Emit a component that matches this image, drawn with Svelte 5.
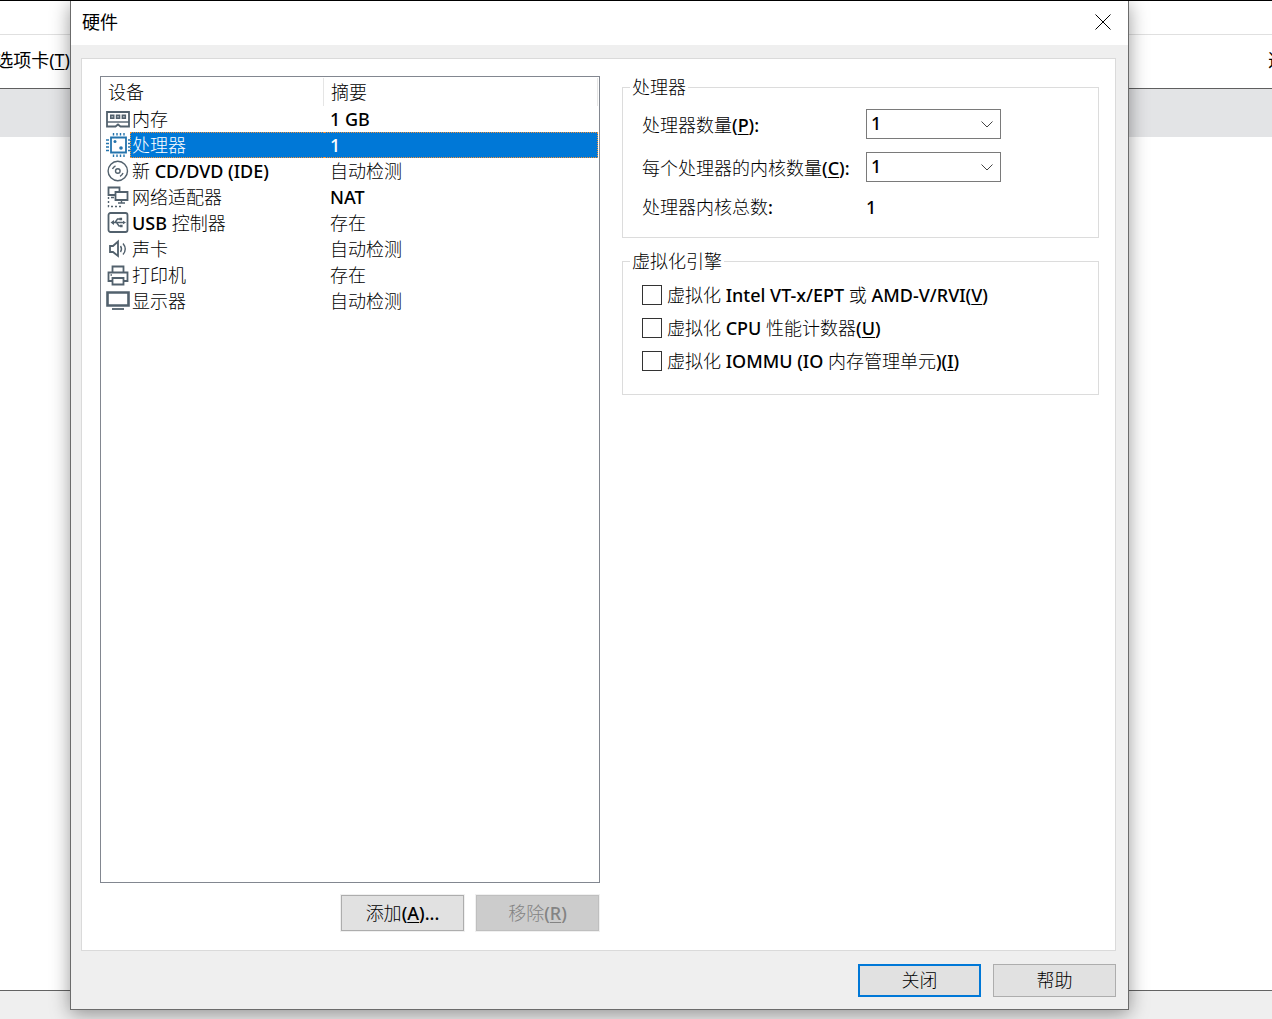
<script>
  const devices = [
    { icon: 'memory', name: '内存', summary: '1 GB' },
    { icon: 'cpu', name: '处理器', summary: '1' },
    { icon: 'disc', name: '新 CD/DVD (IDE)', summary: '自动检测' },
    { icon: 'network', name: '网络适配器', summary: 'NAT' },
    { icon: 'usb', name: 'USB 控制器', summary: '存在' },
    { icon: 'sound', name: '声卡', summary: '自动检测' },
    { icon: 'printer', name: '打印机', summary: '存在' },
    { icon: 'display', name: '显示器', summary: '自动检测' }
  ];
  const options = [
    { text: '虚拟化 Intel VT-x/EPT 或 AMD-V/RVI', key: 'V' },
    { text: '虚拟化 CPU 性能计数器', key: 'U' },
    { text: '虚拟化 IOMMU (IO 内存管理单元)', key: 'I' }
  ];
  const counts = ['1', '2', '4', '8'];

  let selected = $state(1);
  let processors = $state('1');
  let cores = $state('1');
  let total = $derived(Number(processors) * Number(cores));

  // Chinese runs are set light, Latin runs in a heavier weight.
  const runs = (text) => text.match(/[\u4e00-\u9fff]+|[^\u4e00-\u9fff]+/g) ?? [];
  const isHan = (run) => /[\u4e00-\u9fff]/.test(run);
</script>

{#snippet mixed(text, key = '', tail = '')}{#each runs(text) as run}{#if isHan(run)}{run}{:else}<span class="latin">{run}</span>{/if}{/each}{#if key}<span class="latin">(<u>{key}</u>){tail}</span>{/if}{/snippet}

{#snippet deviceIcon(kind)}
  <svg class="icon" viewBox="0 0 24 26" aria-hidden="true">
    {#if kind === 'memory'}
      <path d="M1 6H23V20.5H14.5L12 18.5L9.5 20.5H1Z" class="line2" />
      <path d="M1 16H23" class="line15" />
      <path d="M4.7 9.2h3.1v3.1H4.700zM10.500 9.200h3.100v3.100h-3.100zM16.300 9.200h3.100v3.100h-3.100z" class="line15 tint" />
    {:else if kind === 'cpu'}
      <g class="blue">
        <path d="M5 5.500H20V20.500H5Z" class="line2" />
        <path d="M7.500 1v2.500M11 1v2.500M14.500 1v2.500M18 1v2.500M7.500 22.500v2.500M11 22.500v2.500M14.500 22.500v2.500M18 22.500v2.500M0 8h3M0 11.500h3M0 15h3M0 18.500h3M22 8h2M22 11.500h2M22 15h2M22 18.500h2" class="line15" />
        <circle cx="9" cy="9.500" r="1.500" class="solid" />
        <circle cx="15" cy="16" r="1.800" class="solid" />
      </g>
    {:else if kind === 'disc'}
      <circle cx="11.800" cy="13" r="9.700" class="line15" />
      <circle cx="11.800" cy="13" r="2.300" class="line15" />
      <path d="M6.500 11A6 6 0 0 1 9.500 7.800M17 15A6 6 0 0 1 14 18.300" class="line15" />
    {:else if kind === 'network'}
      <path d="M2.500 3.500H13.500V11H2.500Z" class="line2" />
      <path d="M9.500 8H21.500V16H9.500Z" class="line2 paper" />
      <path d="M15.500 16V19M12 19H19M5 13.500H8" class="line15" />
      <path d="M2.500 13V22.500H15" class="line15 dots" />
    {:else if kind === 'usb'}
      <rect x="2.500" y="3" width="19" height="19" rx="2" class="line2" />
      <path d="M6 12.500H18M9 12.500L11.500 9H14M10.500 12.500L13 16H15" class="line15" />
      <path d="M4.500 12.500L8 10V15ZM20 12.500L17 10.700V14.300ZM13.500 7.700h2.600v2.600h-2.600zM14 14.700h2.600v2.600H14z" class="solid" />
    {:else if kind === 'sound'}
      <path d="M4 10H7L12 5.500V20L7 16H4Z" class="line2" />
      <path d="M14.500 10Q16.500 13 14.500 16M17 7.500Q21.500 13 17 18.500" class="line15" />
    {:else if kind === 'printer'}
      <path d="M6.500 10V4.500H17.500V10M6.500 19H2.500V10.500H21.500V19H17.500" class="line2" />
      <path d="M6.500 16H17.500V22.500H6.500Z" class="line2" />
      <path d="M4.500 13h1.500" class="line15" />
    {:else}
      <path d="M1.500 4.500H22.500V17.500H1.500Z" class="line3" />
      <path d="M6 21H18" class="line2" />
    {/if}
  </svg>
{/snippet}

<div class="screen">
  <div class="backdrop">
    <div class="strip"></div>
    <div class="menu">
      <div class="menu-left"><span>选项卡(<u>T</u>)</span></div>
      <div class="menu-right"><span>选</span></div>
    </div>
    <div class="tabs"></div>
    <div class="canvas"></div>
    <div class="status"></div>
  </div>

  <div class="dialog" role="dialog" aria-labelledby="dialog-title">
    <header>
      <h1 id="dialog-title">硬件</h1>
      <button class="close" aria-label="关闭窗口">
        <svg viewBox="0 0 16 16" aria-hidden="true"><path d="M0.5 0.5L15.5 15.5M15.5 0.5L0.5 15.5" /></svg>
      </button>
    </header>

    <div class="body">
      <main>
        <section class="left">
          <div class="list">
            <table>
              <thead>
                <tr><th class="first"><span>设备</span></th><th><span>摘要</span></th></tr>
              </thead>
              <tbody>
                {#each devices as d, i}
                  <tr class:selected={i === selected} onclick={() => (selected = i)}>
                    <td>
                      <div class="device">{@render deviceIcon(d.icon)}<span class="name">{@render mixed(d.name)}</span></div>
                    </td>
                    <td><div class="summary">{@render mixed(d.summary)}</div></td>
                  </tr>
                {/each}
              </tbody>
            </table>
          </div>
          <div class="actions">
            <button class="tall">{@render mixed('添加', 'A', '...')}</button>
            <button class="tall" disabled>{@render mixed('移除', 'R')}</button>
          </div>
        </section>

        <section class="right">
          <fieldset>
            <legend>处理器</legend>
            <div class="fields">
              <label for="processors">{@render mixed('处理器数量', 'P', ':')}</label>
              <div class="combo">
                <select id="processors" bind:value={processors}>
                  {#each counts as c}<option>{c}</option>{/each}
                </select>
                <svg viewBox="0 0 12 7" aria-hidden="true"><path d="M0.5 0.5L6 6L11.5 0.5" /></svg>
              </div>
              <label for="cores">{@render mixed('每个处理器的内核数量', 'C', ':')}</label>
              <div class="combo">
                <select id="cores" bind:value={cores}>
                  {#each counts as c}<option>{c}</option>{/each}
                </select>
                <svg viewBox="0 0 12 7" aria-hidden="true"><path d="M0.5 0.5L6 6L11.5 0.5" /></svg>
              </div>
              <span>{@render mixed('处理器内核总数:')}</span>
              <output class="latin" for="processors cores">{total}</output>
            </div>
          </fieldset>

          <fieldset>
            <legend>虚拟化引擎</legend>
            <div class="checks">
              {#each options as o}
                <label><input type="checkbox" /><span>{@render mixed(o.text, o.key)}</span></label>
              {/each}
            </div>
          </fieldset>
        </section>
      </main>

      <footer>
        <button class="default">关闭</button>
        <button>帮助</button>
      </footer>
    </div>
  </div>
</div>

<style>
  :global(body) {
    margin: 0;
  }
  .screen {
    display: grid;
    min-height: 100vh;
    overflow: hidden;
    box-sizing: border-box;
    border-top: 1px solid #000;
    font: 300 18px/24px 'Noto Sans', 'Noto Sans CJK SC', sans-serif;
    color: #000;
    background: #fff;
  }
  .backdrop,
  .dialog {
    grid-area: 1 / 1;
    min-width: 0;
  }
  .latin {
    font-weight: 500;
  }
  u {
    text-decoration-thickness: 1px;
    text-underline-offset: 2px;
  }

  /* window behind the dialog */
  .backdrop {
    display: flex;
    flex-direction: column;
  }
  .strip {
    height: 33px;
    border-bottom: 1px solid #e0e0e0;
  }
  .menu {
    box-sizing: border-box;
    display: flex;
    justify-content: space-between;
    align-items: center;
    height: 54px;
    padding-bottom: 3px;
    border-bottom: 1px solid #5f5f5f;
    white-space: nowrap;
    font-weight: 400;
  }
  .menu-left {
    display: flex;
    justify-content: flex-end;
    width: 70px;
    overflow: hidden;
  }
  .menu-right {
    width: 4px;
    overflow: hidden;
  }
  .tabs {
    height: 48px;
    background: #e3e4e6;
  }
  .canvas {
    flex: 1;
    border-bottom: 1px solid #636363;
  }
  .status {
    height: 28px;
    background: #efefef;
  }

  .dialog {
    display: flex;
    flex-direction: column;
    margin: 0 143px 9px 70px;
    border: 1px solid #6b6b6b;
    border-top: 0;
    background: #efefef;
    box-shadow: 0 4px 18px rgba(0, 0, 0, 0.4);
    z-index: 1;
  }
  header {
    box-sizing: border-box;
    display: flex;
    align-items: center;
    justify-content: space-between;
    height: 44px;
    padding: 0 17px 2px 11px;
    background: #fff;
  }
  h1 {
    margin: 0;
    font-size: 18px;
    font-weight: 400;
  }
  .close {
    display: flex;
    width: 16px;
    height: 16px;
    padding: 0;
    border: 0;
    background: none;
  }
  .close svg {
    width: 16px;
    height: 16px;
    fill: none;
    stroke: #000;
  }
  .body {
    display: flex;
    flex: 1;
    flex-direction: column;
    gap: 13px;
    padding: 13px 12px 12px 10px;
  }
  main {
    display: grid;
    flex: 1;
    grid-template-columns: 500fr 477fr;
    gap: 22px;
    padding: 17px 16px 19px 18px;
    border: 1px solid #dadada;
    background: #fff;
  }
  .left,
  .right {
    display: flex;
    flex-direction: column;
    gap: 12px;
    min-width: 0;
  }
  .list {
    flex: 1;
    padding-right: 1px;
    border: 1px solid #828790;
  }

  table {
    width: 100%;
    border-collapse: separate;
    border-spacing: 0;
    table-layout: fixed;
  }
  th,
  td {
    padding: 0;
    text-align: left;
    font-weight: inherit;
  }
  th {
    height: 29px;
  }
  th span {
    display: block;
    margin-top: 1px;
    padding: 2px 0 2px 7px;
    border-right: 1px solid #e5e5e5;
  }
  .first {
    width: 223px;
  }
  .device {
    display: flex;
    padding-left: 5px;
  }
  .icon {
    flex: none;
    width: 24px;
    height: 26px;
    fill: none;
    stroke: #52616d;
  }
  .name {
    flex: 1;
    height: 24px;
    padding-left: 1px;
    border: 1px solid transparent;
    border-right: 0;
  }
  .summary {
    height: 24px;
    padding-left: 6px;
    border: 1px solid transparent;
    border-left: 0;
  }
  .selected .name,
  .selected .summary {
    border-color: #f39239;
    border-style: dotted;
    background: #0078d7;
    color: #fff;
  }
  .line15 {
    stroke-width: 1.4;
  }
  .line2 {
    stroke-width: 1.8;
  }
  .line3 {
    stroke-width: 2.6;
  }
  .solid {
    fill: #52616d;
    stroke: none;
  }
  .tint {
    fill: #a5adb4;
  }
  .paper {
    fill: #fff;
  }
  .dots {
    stroke-dasharray: 2 2;
  }
  .blue {
    stroke: #2474ad;
  }
  .blue .solid {
    fill: #2474ad;
  }

  .actions,
  footer {
    display: flex;
    justify-content: flex-end;
    gap: 12px;
  }
  .actions {
    padding-right: 1px;
  }
  .actions button,
  footer button {
    box-sizing: border-box;
    width: 123px;
    height: 33px;
    padding: 0 0 2px;
    border: 1px solid #adadad;
    background: #e1e1e1;
    color: #000;
    font: inherit;
  }
  .actions .tall {
    height: 36px;
    padding: 0;
    box-shadow: 0 0 0 1px #f0f0f0;
  }
  .actions button:disabled {
    border-color: #bfbfbf;
    background: #ccc;
    color: #838383;
  }
  footer .default {
    border: 2px solid #0078d7;
  }

  fieldset {
    min-width: 0;
    margin: 0;
    padding: 0 7px;
    border: 1px solid #dcdcdc;
  }
  legend {
    padding: 0 2px;
    line-height: 22px;
  }
  .fields {
    display: grid;
    grid-template-columns: 224px 135px;
    align-items: center;
    gap: 13px 0;
    padding: 11px 12px 18px;
    white-space: nowrap;
  }
  .fields label {
    padding-top: 2px;
  }
  .combo {
    display: grid;
    align-items: center;
  }
  .combo select,
  .combo svg {
    grid-area: 1 / 1;
  }
  select {
    appearance: none;
    box-sizing: border-box;
    width: 100%;
    height: 30px;
    padding: 0 4px 2px;
    border: 1px solid #7a7a7a;
    border-radius: 0;
    background: #fff;
    color: #000;
    font: inherit;
    font-weight: 500;
  }
  .combo svg {
    justify-self: end;
    width: 12px;
    height: 7px;
    margin-right: 8px;
    fill: none;
    stroke: #444;
    pointer-events: none;
  }
  .checks {
    display: grid;
    gap: 9px;
    padding: 11px 12px 21px;
    white-space: nowrap;
  }
  .checks label {
    display: flex;
    align-items: center;
    gap: 5px;
  }
  input {
    appearance: none;
    box-sizing: border-box;
    width: 20px;
    height: 20px;
    margin: 0;
    border: 1px solid #333;
    background: #fff;
  }
  input:checked {
    box-shadow: inset 0 0 0 4px #fff;
    background: #333;
  }
</style>
